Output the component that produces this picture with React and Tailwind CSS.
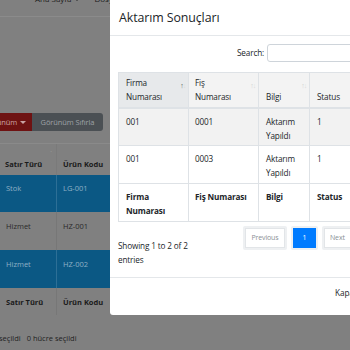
import React from "react";

function Caret({ className = "" }) {
  return (
    <span
      className={
        "inline-block w-0 h-0 border-t-[3px] border-x-[3px] border-x-transparent align-middle " +
        className
      }
    />
  );
}

function Sort({ active }) {
  return (
    <span className="absolute right-[2px] top-[9px] flex text-[7px] leading-[8px]">
      <span className={active ? "text-[#555]" : "text-[#d0d0d0]"}>↑</span>
      <span className="text-[#dcdcdc] -ml-[1px]">↓</span>
    </span>
  );
}

export default function App() {
  return (
    <div className="relative w-[350px] h-[350px] overflow-hidden bg-[#808080] font-['Open_Sans',sans-serif] text-[#1e1e1e]">
      {/* background page */}
      <div className="h-[17px] border-b border-[#8b8b8b] flex items-start text-[8px] leading-[14px] text-[#1c1c1c]">
        <div className="-mt-[8px] ml-[35px] flex items-center gap-[14px]">
          <span className="flex items-center gap-[3px]">
            Ana Sayfa <Caret className="border-t-[#2a2a2a]" />
          </span>
          <span>Dosyalar</span>
        </div>
      </div>

      <div className="mt-[96px] flex h-[18px] text-[7.5px] leading-[18px] tracking-[-0.1px]">
        <div className="-ml-[23px] w-[55px] bg-[#6e1212] text-[#c9a3a3] flex items-center pl-[7px] gap-[3px]">
          Görünüm <Caret className="border-t-[#c9a3a3]" />
        </div>
        <div className="w-[71px] bg-[#4b5054] text-[#9ea2a6] rounded-r-[3px] flex items-center justify-center">
          Görünüm Sıfırla
        </div>
      </div>

      <div className="mt-[12px] text-[7.5px] leading-[14px]">
        <div className="flex h-[32px] border-t border-[#8a8a8a] font-bold text-[#1a1a1a]">
          <div className="relative w-[57px] border-r border-[#7a7a7a] pl-[5px] pt-[13px]">
            Satır Türü
            <span className="absolute right-[4px] top-[3px] text-[6px] text-[#999] leading-[8px]">·</span>
          </div>
          <div className="pl-[6px] pt-[13px]">Ürün Kodu</div>
        </div>
        <div className="flex h-[37px] bg-[#0b5884] text-[#8fb0c5]">
          <div className="w-[57px] border-r border-[#2d6f96] pl-[6px] pt-[6px]">Stok</div>
          <div className="pl-[6px] pt-[6px]">LG-001</div>
        </div>
        <div className="flex h-[38px] text-[#2a2a2a]">
          <div className="w-[57px] border-r border-[#777] pl-[6px] pt-[7px]">Hizmet</div>
          <div className="pl-[6px] pt-[7px]">HZ-001</div>
        </div>
        <div className="flex h-[38px] bg-[#0b5884] text-[#8fb0c5]">
          <div className="w-[57px] border-r border-[#2d6f96] pl-[6px] pt-[7px]">Hizmet</div>
          <div className="pl-[6px] pt-[7px]">HZ-002</div>
        </div>
        <div className="flex h-[27px] font-bold text-[#1a1a1a]">
          <div className="w-[57px] border-r border-[#777] pl-[6px] pt-[7px]">Satır Türü</div>
          <div className="pl-[6px] pt-[7px]">Ürün Kodu</div>
        </div>
        <div className="mt-[16px] flex gap-[6px] text-[#222] -ml-[1px]">
          <span>seçildi</span>
          <span>0 hücre seçildi</span>
        </div>
      </div>

      {/* modal */}
      <div className="absolute left-[110px] top-0 w-[300px] h-[315px] bg-white rounded-b-[3px] flex flex-col text-[#212529]">
        <div className="h-[36px] border-b border-[#e4e7ea] flex items-center pl-[9px]">
          <span className="text-[12.4px] font-medium leading-[16px] tracking-[-0.1px]">Aktarım Sonuçları</span>
        </div>
        <div className="h-[242px] border-b border-[#e4e7ea] pl-[8px] text-[8.2px] leading-[14px] tracking-[-0.15px]">
          <div className="mt-[8px] flex items-center ml-[119px] gap-[3px] h-[18px]">
            <span>Search:</span>
            <div className="w-[100px] h-[18px] border border-[#ced4da] rounded-[3px]" />
          </div>
          <table className="mt-[10px] table-fixed border-collapse w-[300px]">
            <colgroup>
              <col className="w-[70px]" />
              <col className="w-[70px]" />
              <col className="w-[51px]" />
              <col className="w-[109px]" />
            </colgroup>
            <thead>
              <tr className="h-[35px]">
                <th className="relative border border-[#dee2e6] border-b-2 bg-[#e7e9eb] align-bottom text-left font-normal px-[7px] pb-[3px]">
                  Firma<br />Numarası
                  <Sort active />
                </th>
                <th className="relative border border-[#dee2e6] border-b-2 bg-[#f3f3f3] align-bottom text-left font-normal px-[6px] pb-[3px]">
                  Fiş<br />Numarası
                  <Sort />
                </th>
                <th className="relative border border-[#dee2e6] border-b-2 bg-[#f3f3f3] align-bottom text-left font-normal px-[7px] pb-[3px]">
                  Bilgi
                  <Sort />
                </th>
                <th className="border border-[#dee2e6] border-b-2 bg-[#f3f3f3] align-bottom text-left font-normal px-[7px] pb-[3px]">
                  Status
                </th>
              </tr>
            </thead>
            <tbody>
              <tr className="h-[38px] bg-[#f2f2f2]">
                <td className="border border-[#dee2e6] align-top px-[7px] pt-[6px]">001</td>
                <td className="border border-[#dee2e6] align-top px-[6px] pt-[6px]">0001</td>
                <td className="border border-[#dee2e6] align-top px-[7px] pt-[6px]">Aktarım<br />Yapıldı</td>
                <td className="border border-[#dee2e6] align-top px-[7px] pt-[6px]">1</td>
              </tr>
              <tr className="h-[38px] bg-white">
                <td className="border border-[#dee2e6] align-top px-[7px] pt-[6px]">001</td>
                <td className="border border-[#dee2e6] align-top px-[6px] pt-[6px]">0003</td>
                <td className="border border-[#dee2e6] align-top px-[7px] pt-[6px]">Aktarım<br />Yapıldı</td>
                <td className="border border-[#dee2e6] align-top px-[7px] pt-[6px]">1</td>
              </tr>
            </tbody>
            <tfoot>
              <tr className="h-[38px] font-bold">
                <td className="border border-[#dee2e6] align-top px-[7px] pt-[6px]">Firma<br />Numarası</td>
                <td className="border border-[#dee2e6] align-top px-[6px] pt-[6px]">Fiş Numarası</td>
                <td className="border border-[#dee2e6] align-top px-[7px] pt-[6px]">Bilgi</td>
                <td className="border border-[#dee2e6] align-top px-[7px] pt-[6px]">Status</td>
              </tr>
            </tfoot>
          </table>
          <div className="flex items-start">
            <div className="w-[84px] pt-[17px]">Showing 1 to 2 of 2 entries</div>
            <div className="ml-[41px] mt-[4px] flex gap-[4px] text-[7px] leading-[12px]">
              <div className="p-[2px] bg-[#eef0f2] rounded-[2px]">
                <div className="h-[20px] w-[40px] bg-white border border-[#e2e5e8] text-[#8a9096] flex items-center justify-center">
                  Previous
                </div>
              </div>
              <div className="p-[2px] bg-[#eef0f2] rounded-[2px]">
                <div className="h-[20px] w-[23px] bg-[#007bff] text-white flex items-center justify-center">
                  1
                </div>
              </div>
              <div className="p-[2px] bg-[#eef0f2] rounded-[2px]">
                <div className="h-[20px] w-[34px] bg-white border border-[#e2e5e8] text-[#8a9096] flex items-center pl-[5px]">
                  Next
                </div>
              </div>
            </div>
          </div>
        </div>
        <div className="flex-1 flex items-center pb-[6px] pl-[225px] text-[8.2px] text-[#212529]">
          Kapat
        </div>
      </div>
    </div>
  );
}
